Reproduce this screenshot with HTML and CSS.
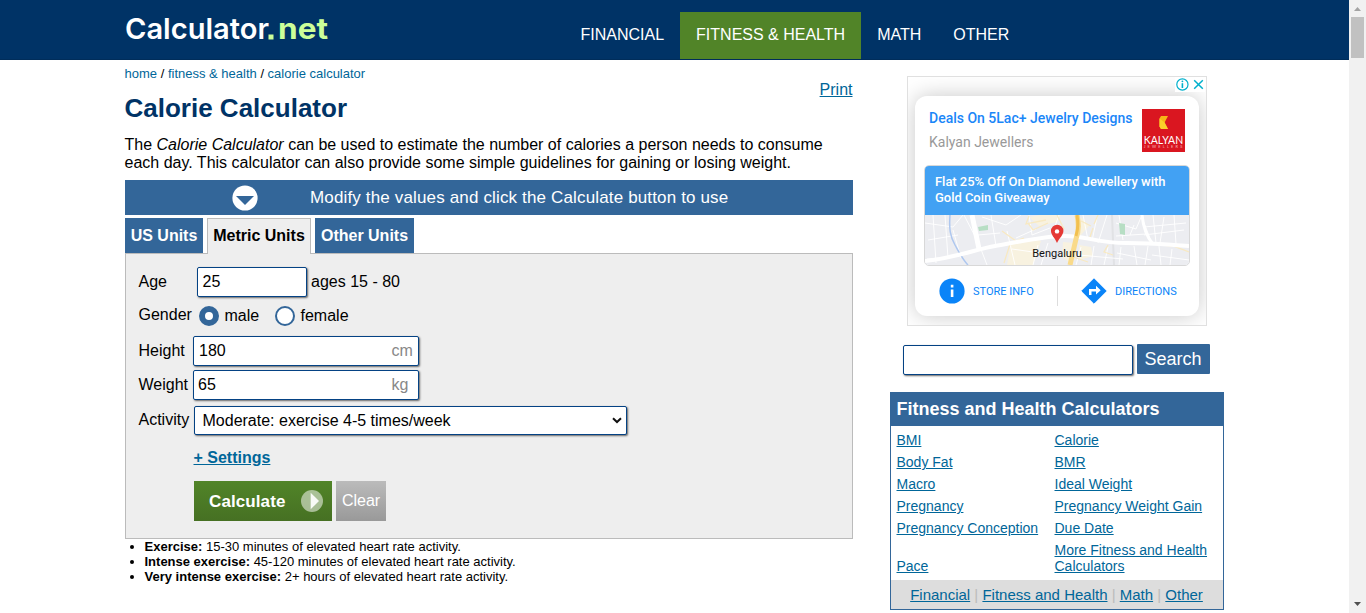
FILE: index.html
```html
<!DOCTYPE html>
<html lang="en">
<head>
<meta charset="utf-8">
<title>Calorie Calculator</title>
<link rel="stylesheet" href="styles.css">
</head>
<body>
<div class="page">
  <header class="header">
    <a class="logo" href="#" aria-label="Calculator.net">
      <svg width="216" height="44" viewBox="0 0 216 44">
        <text class="logo-name" x="0" y="35" textLength="144" lengthAdjust="spacingAndGlyphs">Calculator</text>
        <rect x="143.500" y="30.500" width="5" height="5" fill="#ccff99"/>
        <text class="logo-tld" x="153" y="35" textLength="50" lengthAdjust="spacingAndGlyphs">net</text>
      </svg>
    </a>
    <nav class="nav">
      <a href="#">FINANCIAL</a><a class="active" href="#">FITNESS &amp; HEALTH</a><a href="#">MATH</a><a href="#">OTHER</a>
    </nav>
  </header>
  <div class="content">
    <main class="main">
      <div class="crumbs"><a href="#">home</a> / <a href="#">fitness &amp; health</a> / <a href="#">calorie calculator</a></div>
      <div class="title-row"><h1>Calorie Calculator</h1><a class="print" href="#">Print</a></div>
      <p class="intro">The <i>Calorie Calculator</i> can be used to estimate the number of calories a person needs to consume<br>each day. This calculator can also provide some simple guidelines for gaining or losing weight.</p>
      <div class="notice">
        <svg width="26" height="26" viewBox="0 0 26 26"><circle cx="13" cy="13" r="12.6" fill="#fff"/><path d="M4 11h18l-9 9z" fill="#336699"/></svg>
        <span>Modify the values and click the Calculate button to use</span>
      </div>
      <div class="tabs"><a class="tab us" href="#">US Units</a><a class="tab on" href="#">Metric Units</a><a class="tab other" href="#">Other Units</a></div>
      <form class="panel">
        <div class="row age"><label>Age</label><div class="field">25</div><span class="hint">ages 15 - 80</span></div>
        <div class="row gender"><label>Gender</label><i class="radio checked"></i><span class="male">male</span><i class="radio"></i><span>female</span></div>
        <div class="row height"><label>Height</label><div class="field wide"><span>180</span><em>cm</em></div></div>
        <div class="row weight"><label>Weight</label><div class="field wide"><span>65</span><em>kg</em></div></div>
        <div class="row activity"><label>Activity</label><div class="field select"><span>Moderate: exercise 4-5 times/week</span>
          <svg width="10" height="7" viewBox="0 0 10 7"><path d="M1 1.2l4 3.8 4-3.8" fill="none" stroke="#111" stroke-width="2"/></svg></div></div>
        <div class="settings"><a href="#">+ Settings</a></div>
        <div class="buttons">
          <div class="calculate"><span>Calculate</span>
            <svg width="22" height="22" viewBox="0 0 22 22"><circle cx="11" cy="11" r="11" fill="#fff" fill-opacity=".52"/><path d="M9.7 2.7v16.6L18 11z" fill="#fff" fill-opacity=".92"/></svg></div>
          <div class="clear">Clear</div>
        </div>
      </form>
      <ul class="notes">
        <li><b>Exercise:</b> 15-30 minutes of elevated heart rate activity.</li>
        <li><b>Intense exercise:</b> 45-120 minutes of elevated heart rate activity.</li>
        <li><b>Very intense exercise:</b> 2+ hours of elevated heart rate activity.</li>
      </ul>
    </main>
    <aside class="side">
      <div class="ad">
        <div class="ad-choices">
          <svg width="30" height="15" viewBox="0 0 30 15"><rect width="30" height="15" fill="#fff"/><g fill="none" stroke="#00b0cc" stroke-width="1.2"><circle cx="7.4" cy="7.5" r="5.6"/><path d="M7.400 6.200v4.800" stroke-width="1.600"/><path d="M19.2 3.2l8.6 8.6M27.8 3.2l-8.6 8.6" stroke-width="1.5"/></g><circle cx="7.4" cy="4.3" r=".9" fill="#00b0cc"/></svg>
        </div>
        <div class="ad-card">
          <div class="ad-top">
            <div class="ad-names"><div class="ad-title">Deals On 5Lac+ Jewelry Designs</div><div class="ad-brand">Kalyan Jewellers</div></div>
            <svg class="brand-logo" width="43" height="43" viewBox="0 0 43 43"><rect width="43" height="43" fill="#da1620"/><path d="M19 7h7l-3.400 6.500L26 20h-7l-1.500-2.500v-8z" fill="#f7b516"/><path d="M17.500 9.500L22.600 13.500 26 20h-7l-1.500-2.500z" fill="#fbd02a"/><text class="kal" x="1.8" y="34.7" textLength="39.4" lengthAdjust="spacingAndGlyphs">KALYAN</text><text class="jew" x="1.8" y="39.2" textLength="38.5">JEWELLERS</text></svg>
          </div>
          <div class="ad-box">
            <div class="ad-offer">Flat 25% Off On Diamond Jewellery with<br>Gold Coin Giveaway</div>
            <div class="map">
              <svg width="264" height="50" viewBox="0 0 264 50">
                <rect width="264" height="50" fill="#ecedf1"/>
                <path d="M86 27l20-4 10 3-8 24H82zM104 2l12-2h20l-4 7-18 4zM156 2l8 9-9 10-4 1zM138 27l11 1-4 20-8-6zM154 30l12 2 2 9-14 4z" fill="#f8f2e0"/>
                <path d="M187 0l2 50" stroke="#e1e2e5" stroke-width="2"/>
                <g fill="none" stroke="#fff" stroke-width=".9"><path d="M0 8l28 4 10-12M3 25l30-5M2 44l32-3M8 0l3 48M20 0l3 43M28 15l8 28M39 0l15 29 8 21M53 20l22-2M57 2l24 8 15-10M66 0l5 31M82 16l8 34M91 23l20-9M104 0l3 20 18-7M87 34l35 5M113 30l-5 20M123 28l-7 22M134 0l-5 14M158 0l5 25M172 2l-5 24M182 0l-9 28M191 8l20 6 6-14M191 21l30-2M194 0l4 25M205 20l4-10M216 0l10 26M228 0l3 28M239 2l-4 26M249 0l2 29M219 12l42-4M219 20l40-5M156 32l-5 18M169 31l-3 19M183 32l-4 18M196 32l-2 18M209 31l3 19M223 31l-3 19M234 31l2 19M247 34l-2 16M154 40l44 4M192 38l34 7M227 40l37 5"/></g>
                <g fill="none" stroke="#f8e9c2" stroke-width="1.3"><path d="M77 16l14 10 8-3M86 26l-7 22M104 1l-3 8 20-4M103 8l5 7 15-7M132 0l7 14M156 6l10 5M164 25l4-12M173 0l-4 9M183 30l-4 7 9 3M218 28l30 3 16 6M148 42l15 5"/></g>
                <path d="M25 0c-1 14 0 21 5 30S38 45 43 50" fill="none" stroke="#aec7ef" stroke-width="1.5"/>
                <g fill="none" stroke="#fff"><path d="M47 0l7 34" stroke-width="5"/><path d="M0 46C30 43 52 34 70 31s48-10 70-10 32 7 62 7 42 2 62 3" stroke-width="4"/><path d="M217 0q2 19 11 29" stroke-width="3"/></g>
                <path d="M53 12l10-2v5l-9 1zM194 8l6 1v11l-5-1z" fill="#b7dec4"/>
                <path d="M152 0q3 14-1 24l-6 26" fill="none" stroke="#f9da8a" stroke-width="5"/><path d="M152 0q2 12-1 21" fill="none" stroke="#f2c04f" stroke-width="3"/>
                <path d="M132 28c-2-5-6-8-6-12a6 6 0 0 1 12.4 0c0 4-4 7-6.400 12z" fill="#e53935"/><circle cx="132" cy="16.400" r="2.200" fill="#fff"/>
              </svg>
              <span class="city">Bengaluru</span>
            </div>
          </div>
          <div class="ad-actions">
            <div class="action store"><svg width="26" height="26" viewBox="0 0 26 26"><circle cx="13" cy="13" r="12.6" fill="#0a84f8"/><path d="M11.800 11.500h2.600v7.500h-2.600zM11.800 6.800h2.600v2.600h-2.600z" fill="#fff"/></svg><span>STORE INFO</span></div>
            <div class="action dir"><svg width="26" height="26" viewBox="0 0 26 26"><path d="M13 .8L25.200 13 13 25.200.8 13z" fill="#0a84f8" stroke="#0a84f8" stroke-linejoin="round"/><path d="M8 17v-6h7V7.800l4.700 4.400-4.700 4.400v-3.200h-4.500V17z" fill="#fff"/></svg><span>DIRECTIONS</span></div>
          </div>
        </div>
      </div>
      <div class="search"><div class="field"></div><div class="search-btn">Search</div></div>
      <section class="related">
        <h2>Fitness and Health Calculators</h2>
        <div class="links">
          <a href="#">BMI</a><a href="#">Calorie</a>
          <a href="#">Body Fat</a><a href="#">BMR</a>
          <a href="#">Macro</a><a href="#">Ideal Weight</a>
          <a href="#">Pregnancy</a><a href="#">Pregnancy Weight Gain</a>
          <a href="#">Pregnancy Conception</a><a href="#">Due Date</a>
          <a href="#">Pace</a><a href="#">More Fitness and Health<br>Calculators</a>
        </div>
        <div class="cats"><a href="#">Financial</a> | <a href="#">Fitness and Health</a> | <a href="#">Math</a> | <a href="#">Other</a></div>
      </section>
    </aside>
  </div>
</div>
<div class="scrollbar">
  <svg width="17" height="17" viewBox="0 0 17 17"><path d="M5 11h7L8.500 7z" fill="#a3a3a3"/></svg>
  <div class="thumb"></div>
  <svg width="17" height="17" viewBox="0 0 17 17"><path d="M5 6h7l-3.500 4z" fill="#505050"/></svg>
</div>
</body>
</html>
```
FILE: styles.css
```css
* { box-sizing: border-box; }
body { margin: 0; height: 613px; overflow: hidden; display: flex; background: #fff; font: 16px/18px "Liberation Sans", Arial, sans-serif; color: #000; }
a { color: #006699; }
svg { display: block; flex: none; }
.page { width: 1349px; height: 613px; overflow: hidden; }
.header { height: 60px; background: #003366; display: flex; border-bottom: 1px solid #002d5a; padding-left: 125px; }
.logo { width: 439.500px; padding-top: 4px; }
.logo svg, .brand-logo { overflow: visible; }
.logo-name { font: 600 29px Inter, sans-serif; fill: #fff; }
.logo-tld { font: 700 29px Inter, sans-serif; fill: #ccff99; }
.nav { display: flex; padding-top: 12px; height: 59px; }
.nav a { padding: 0 16px; line-height: 45px; height: 47px; color: #fff; text-decoration: none; white-space: nowrap; }
.nav .active { background: #518428; }
.content { display: flex; padding-left: 124.500px; }
.main { width: 728px; }
.crumbs { font-size: 13px; line-height: 15px; padding-top: 6px; height: 29px; white-space: nowrap; }
.crumbs a { text-decoration: none; }
.title-row { display: flex; justify-content: space-between; height: 47px; }
h1 { margin: 3px 0 0; font-size: 26px; line-height: 32px; color: #003366; }
.print { line-height: 18px; margin-top: -8px; }
.intro { margin: 0; height: 44px; white-space: nowrap; }
.notice { height: 35px; background: #336699; color: #fff; display: flex; align-items: center; padding-left: 107px; gap: 52.500px; font-size: 17px; letter-spacing: .15px; white-space: nowrap; }
.tabs { display: flex; height: 38px; padding-top: 3px; }
.tab { height: 35px; line-height: 35px; font-weight: bold; color: #fff; background: #336699; text-decoration: none; text-align: center; white-space: nowrap; padding-left: 1px; }
.us { width: 78px; margin-right: 4px; }
.on { width: 104px; height: 36px; line-height: 34px; margin-right: 4px; background: #eee; color: #000; border: 1px solid #bbb; border-bottom: 0; z-index: 1; }
.other { width: 99px; }
.panel { height: 286px; background: #eee; border: 1px solid #bbb; padding: 13px 0 0 13px; }
.row { display: flex; white-space: nowrap; }
.row label { width: 54px; }
.field { height: 30px; border: 1px solid #044284; border-radius: 2px; background: #fff; box-shadow: 1px 1px 2px #666; padding: 0 5px; line-height: 28px; }
.age { height: 39px; line-height: 29px; }
.age .field { width: 110px; margin: 0 4.500px 0 4px; }
.gender { height: 30px; line-height: 18px; align-items: flex-start; }
.gender label { width: 60px; }
.radio { width: 20px; height: 20px; border: 2px solid #336699; border-radius: 50%; background: #fff; }
.checked { border-width: 6px; }
.gender span { padding: 0 0 0 6px; margin-top: 1px; }
.gender .male { width: 56px; }
.height { height: 34px; line-height: 29px; }
.weight { height: 36px; line-height: 29px; }
.wide { width: 226px; display: flex; justify-content: space-between; padding: 0 4px 0 5.500px; }
.wide em { width: 22px; font-style: normal; color: #888; }
.weight .field { padding-left: 4.500px; }
.activity { line-height: 27px; height: 43px; }
.row.activity label { width: 55px; line-height: 28px; }
.select { width: 433.500px; height: 29px; line-height: 27px; display: flex; justify-content: space-between; align-items: center; padding: 0 4px 0 8px; }
.settings { padding-left: 55px; font-weight: bold; height: 32px; }
.buttons { display: flex; gap: 4px; padding-left: 55px; }
.calculate { width: 138px; height: 40px; line-height: 20px; display: flex; align-items: center; justify-content: space-between; padding: 0 9px 0 15.500px; background: linear-gradient(#518428, #467023); color: #fff; font-weight: bold; font-size: 17px; letter-spacing: .1px; }
.calculate span { padding-top: 1px; }
.clear { width: 50px; height: 40px; line-height: 40px; padding-left: 1px; text-align: center; color: #fff; background: linear-gradient(#bbb, #999); }
.notes { margin: 0; padding-left: 20px; font-size: 13px; line-height: 15px; white-space: nowrap; }
.side { width: 334px; margin-left: 37px; padding-top: 16px; }
.ad { width: 300px; height: 250px; margin-left: 17.500px; border: 1px solid #e0e0e0; position: relative; overflow: hidden; padding: 19px 7px 0; font-family: Roboto, sans-serif; }
.ad-choices { position: absolute; right: 1px; top: 0; }
.ad-card { height: 220px; border-radius: 12px; background: #fff; box-shadow: 0 0 22px rgba(0,0,0,.22); padding: 13px 9px 0 9px; }
.ad-top { display: flex; justify-content: space-between; height: 56px; padding: 0 5px; }
.ad-title { font-size: 14px; font-weight: 500; line-height: 18px; color: #1a86f8; white-space: nowrap; }
.ad-brand { font-size: 14px; line-height: 18px; margin-top: 6px; color: #999; }
.kal { font: 12px Lato, sans-serif; fill: #fff; }
.jew { font: 4px Lato, sans-serif; fill: #f5b8b8; }
.ad-box { height: 101px; width: 266px; border: 1px solid #d8d8d8; border-radius: 5px; overflow: hidden; }
.ad-offer { height: 49px; background: #42a1f3; color: #fff; font-size: 13px; font-weight: 500; line-height: 16px; padding: 8px 10px; white-space: nowrap; letter-spacing: -.04px; }
.map { position: relative; }
.city { position: absolute; left: 0; right: 0; top: 31px; text-align: center; font-size: 11px; line-height: 16px; color: #111; }
.ad-actions { display: flex; height: 30px; margin-top: 10px; }
.action { display: flex; align-items: center; color: #0a84f8; font-size: 11px; white-space: nowrap; }
.action span { padding-top: 2px; }
.store { width: 134px; border-right: 1px solid #ddd; padding-left: 15px; gap: 8px; }
.dir { padding-left: 23px; gap: 8px; }
.search { display: flex; gap: 4px; margin: 18px 0 18px 13px; height: 30px; }
.search .field { width: 230px; height: 30px; margin-top: 1px; }
.search-btn { width: 73px; height: 30px; background: #336699; color: #fff; font-size: 18px; line-height: 30px; text-align: center; border-radius: 1px; }
.related { border: 1px solid #336699; height: 218px; }
h2 { margin: 0; height: 33px; background: #336699; color: #fff; font-size: 18px; line-height: 32px; padding-left: 6px; white-space: nowrap; }
.links { display: grid; grid-template-columns: 158px auto; row-gap: 6px; font-size: 14px; line-height: 16px; padding: 6px 0 0 6px; height: 154px; align-items: end; align-content: start; justify-items: start; white-space: nowrap; }
.cats { height: 29px; background: #ddd; color: #bbb; font-size: 15px; line-height: 30px; text-align: center; white-space: nowrap; }
.scrollbar { width: 17px; height: 613px; background: #f1f1f1; display: flex; flex-direction: column; }
.thumb { width: 13px; height: 41px; margin: 0 2px auto; background: #c1c1c1; }
```
